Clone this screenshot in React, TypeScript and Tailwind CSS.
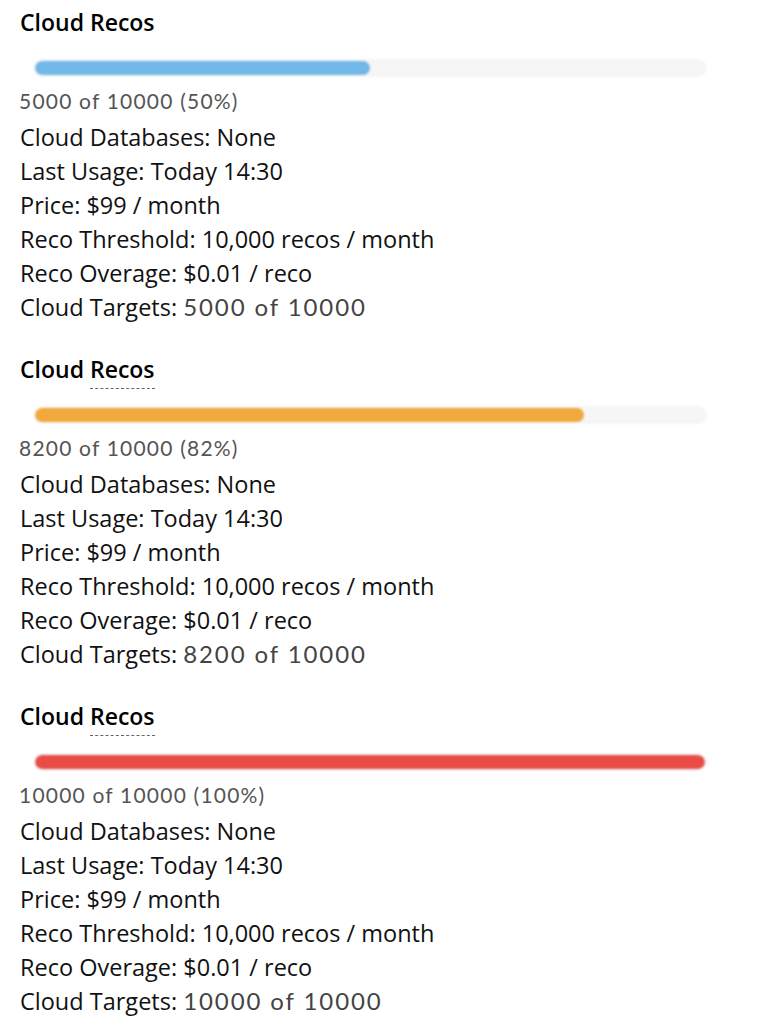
import React from 'react';

type Reco = {
    used: number;
    total: number;
    fill: string;
    underline: boolean;
};

const recos: Reco[] = [
    { used: 5000, total: 10000, fill: 'bg-[#72b8e8]', underline: false },
    { used: 8200, total: 10000, fill: 'bg-[#f2a83c]', underline: true },
    { used: 10000, total: 10000, fill: 'bg-[#e84c45]', underline: true },
];

function UsageBar({ pct, fill }: { pct: number; fill: string }) {
    return (
        <div className="ml-[15px] w-[670px] h-[14px] rounded-full bg-[#f6f6f6] shadow-[0_0_3px_rgba(0,0,0,0.15)] blur-[1px] overflow-hidden">
            <div className={`h-full rounded-full ${fill}`} style={{ width: `${pct}%` }} />
        </div>
    );
}

function RecoCard({ reco }: { reco: Reco }) {
    const pct = Math.round((reco.used / reco.total) * 100);
    return (
        <section className="flex flex-col">
            <h2 className="text-[23px] leading-[30px] font-semibold text-black">
                Cloud{' '}
                <span className={reco.underline ? 'border-b border-dashed border-[#666] pb-[3px]' : ''}>Recos</span>
            </h2>
            <div className="mt-[24px]">
                <UsageBar pct={pct} fill={reco.fill} />
            </div>
            <p className="mt-[14px] -ml-[1px] text-[21px] leading-[24px] tracking-[1.2px] text-[#555] font-['Lato',sans-serif] whitespace-nowrap">
                {reco.used} of {reco.total} ({pct}%)
            </p>
            <ul className="mt-[7px] text-[23.5px] leading-[34px] text-[#111]">
                <li>Cloud Databases: None</li>
                <li>Last Usage: Today 14:30</li>
                <li>Price: $99 / month</li>
                <li>Reco Threshold: 10,000 recos / month</li>
                <li>Reco Overage: $0.01 / reco</li>
                <li>
                    Cloud Targets:{' '}
                    <span className="text-[24px] tracking-[1.9px] text-[#444] font-['Lato',sans-serif]">
                        {reco.used} of {reco.total}
                    </span>
                </li>
            </ul>
        </section>
    );
}

export default function App() {
    return (
        <main className="w-[772px] min-h-[1024px] bg-white pl-[20px] pt-[7px] font-['Open_Sans',sans-serif] flex flex-col gap-[30px]">
            {recos.map((r, i) => (
                <RecoCard key={i} reco={r} />
            ))}
        </main>
    );
}
